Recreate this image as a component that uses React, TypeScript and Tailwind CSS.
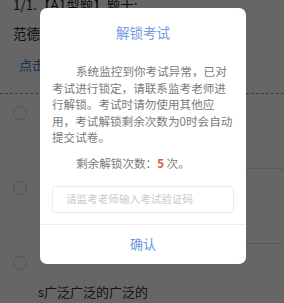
import React from 'react';

const options = ['', '', 's广泛广泛的广泛的'];

export default function App() {
  return (
    <div
      className="relative h-[303px] w-[284px] overflow-hidden bg-white"
      style={{ fontFamily: '"Noto Sans CJK SC", "Noto Sans", sans-serif' }}
    >
      {/* page behind the dialog */}
      <div className="-mt-[5px] pl-[13px] text-[13.5px] leading-[18px] text-[#222]">1/1.【A1型题】题干:</div>
      <div className="mt-[11px] pl-[13px] text-[13.5px] leading-[18px] text-[#222]">范德萨地方</div>
      <div className="mt-[14px] pl-[19px] text-[13px] leading-[18px] text-[#3d7ad6]">点击查看大图</div>
      <div className="mt-[19px] border-t border-dashed border-[#9a9a9a]" />
      {options.map((text, i) => (
        <div key={i} className="h-[75px]">
          <div className="flex pl-[13px] pt-[12px]">
            <div className="h-[14px] w-[14px] rounded-full border border-[#cfcfcf] bg-white" />
          </div>
          <div className="mt-[13px] h-[35px] pl-[38px] text-[13px] leading-[18px] text-[#333]">{text}</div>
          <div className="ml-[38px] border-t border-[#e0e0e0]" />
        </div>
      ))}

      {/* overlay */}
      <div className="absolute inset-0 bg-black/60" />

      {/* dialog */}
      <div className="absolute left-[40px] top-[8px] w-[206px] rounded-[7px] bg-white">
        <div className="pt-[15px] text-center text-[13.5px] leading-[18px] text-[#739ae0]">解锁考试</div>
        <div className="mt-[22px] px-[12px] text-[11.6px] leading-[16.5px] text-[#7a7a7a]">
          <p className="indent-[24px]">
            系统监控到你考试异常，已对
            <br />
            考试进行锁定，请联系监考老师进
            <br />
            行解锁。考试时请勿使用其他应
            <br />
            用，考试解锁剩余次数为0时会自动
            <br />
            提交试卷。
          </p>
          <p className="mt-[9.5px] indent-[24px]">
            剩余解锁次数：<span className="font-bold text-[#e0553f]">5</span> 次。
          </p>
          <div className="mt-[14px] flex h-[27px] items-center rounded-[3px] border border-[#ececec] pl-[13px] text-[10.6px] text-[#c9c9c9]">
            请监考老师输入考试验证码
          </div>
        </div>
        <div className="mt-[11px] border-t border-[#ededed]" />
        <div className="flex h-[39px] items-center justify-center text-[13px] text-[#6b95e0]">确认</div>
      </div>
    </div>
  );
}
